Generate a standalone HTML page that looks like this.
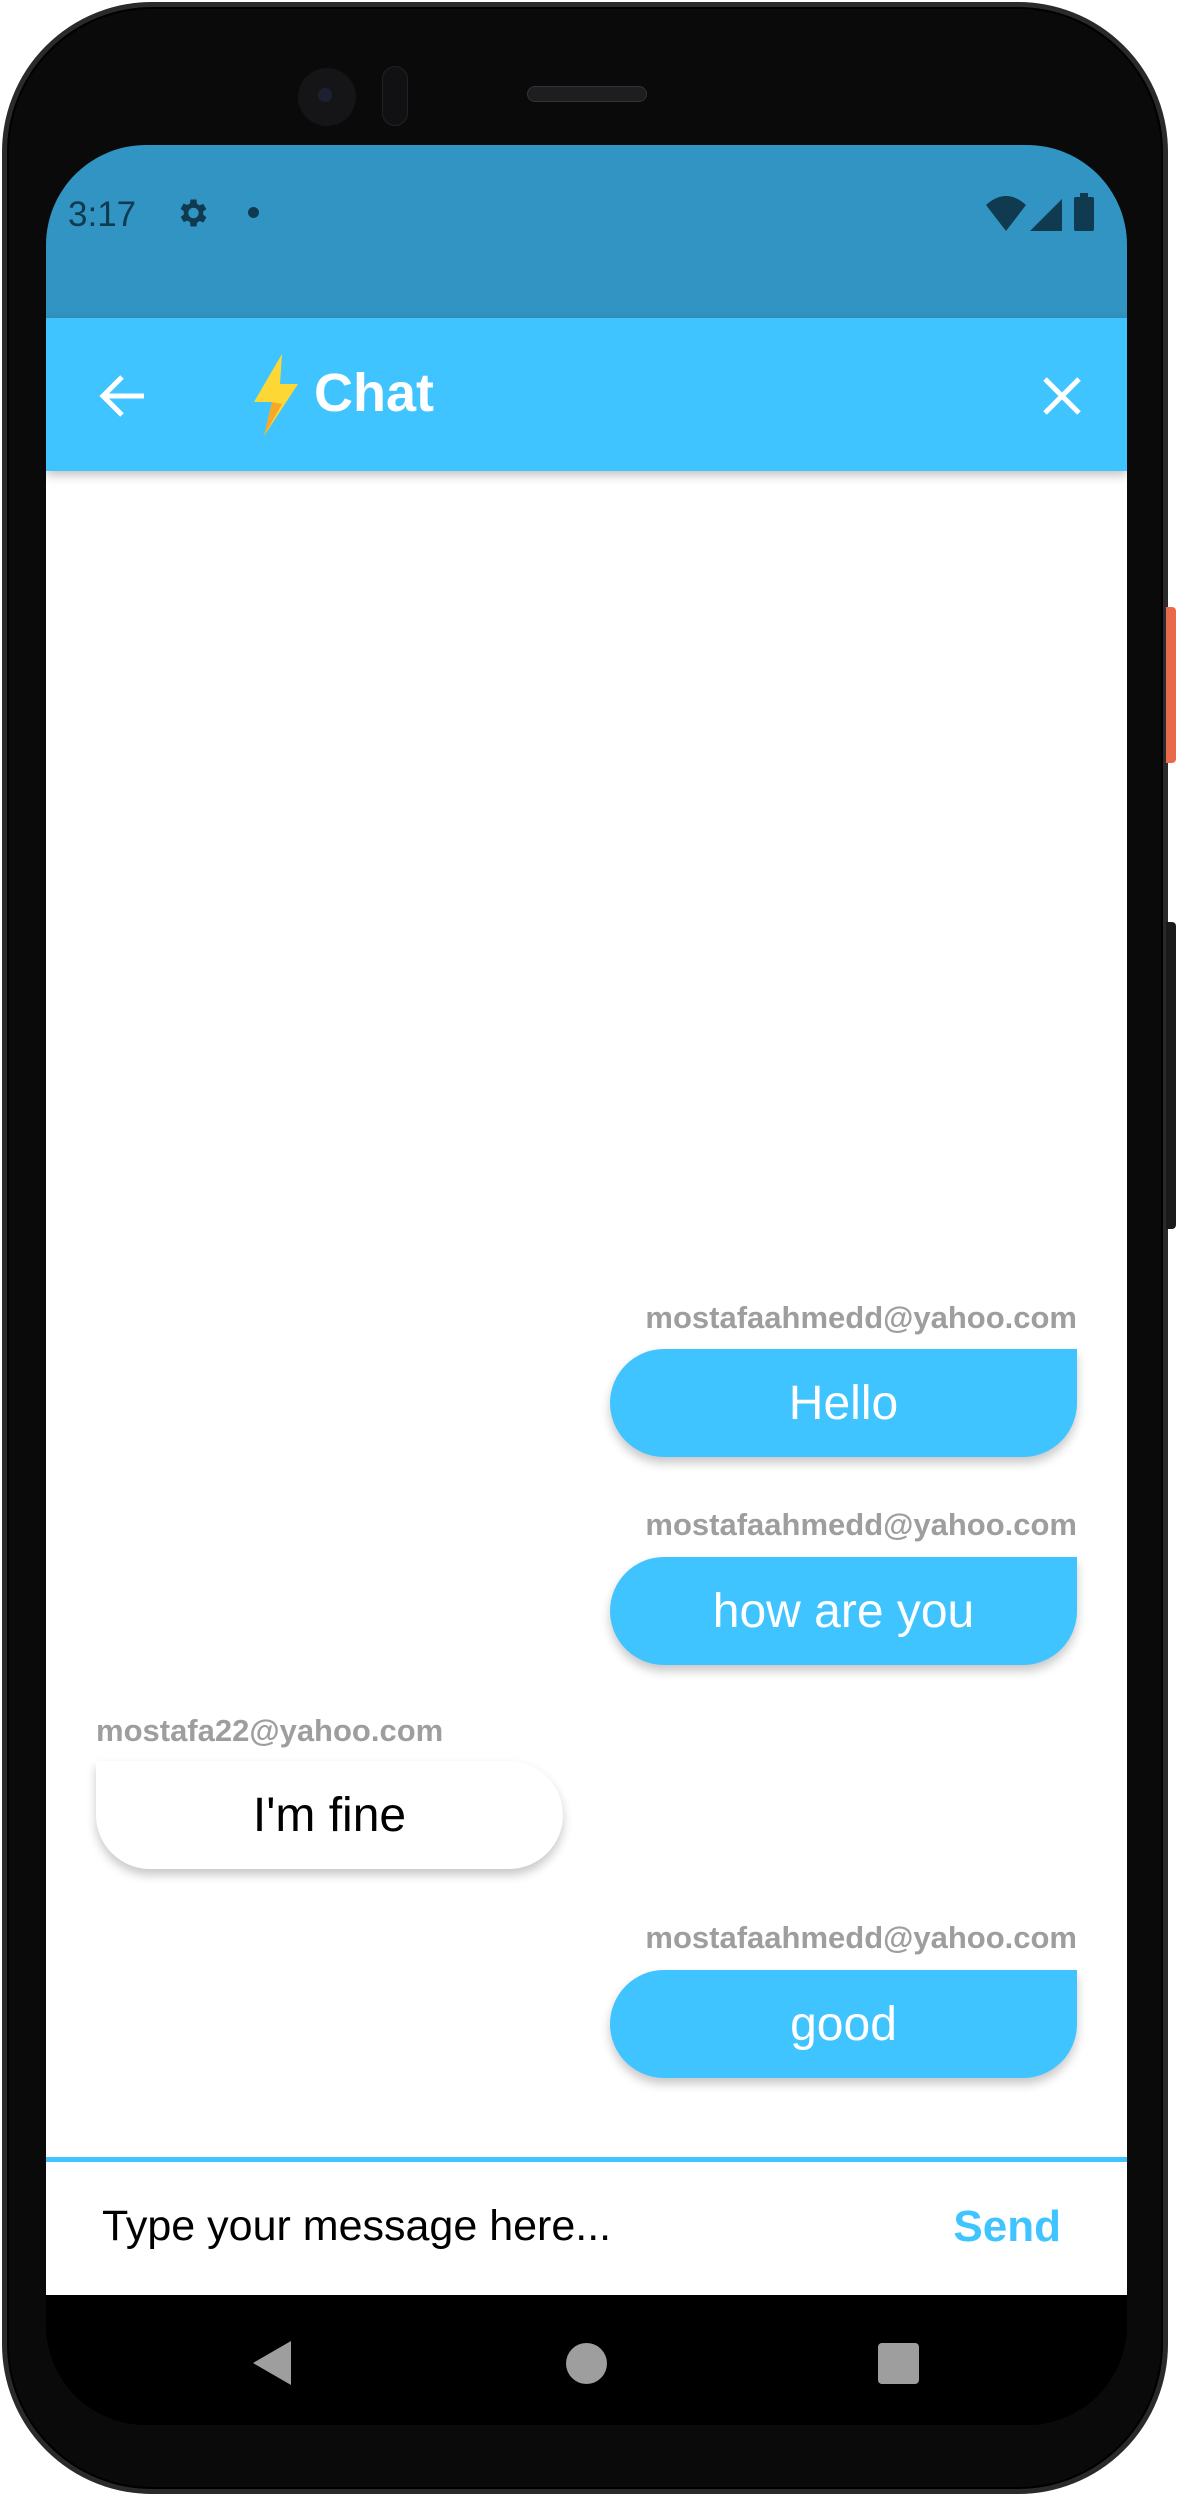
<!DOCTYPE html>
<html><head><meta charset="utf-8">
<style>
*{margin:0;padding:0;box-sizing:border-box}
html,body{width:1178px;height:2498px;background:#fff;overflow:hidden;font-family:"Liberation Sans",sans-serif}
.phone{position:absolute;left:2px;top:2px;width:1166px;height:2492px;border-radius:150px;background:#0a0a0b;border:5px solid #2a2a2c;box-shadow:0 0 0 2px #000 inset}
.btn1{position:absolute;left:1166px;top:607px;width:10px;height:156px;background:#e86a4a;border-radius:0 4px 4px 0}
.btn2{position:absolute;left:1166px;top:922px;width:10px;height:307px;background:#1a1a1a;border-radius:0 4px 4px 0}
.screen{position:absolute;left:46px;top:145px;width:1081px;height:2280px;border-radius:100px;overflow:hidden;background:#000}
.status{position:absolute;left:0;top:0;width:100%;height:173px;background:#3194c2}
.appbar{position:absolute;left:0;top:173px;width:100%;height:153px;background:#40c4ff;box-shadow:0 4px 10px rgba(0,0,0,.25);z-index:2}
.content{position:absolute;left:0;top:326px;width:100%;height:1824px;background:#fff;overflow:hidden}
.nav{position:absolute;left:0;top:2150px;width:100%;height:132px;background:#000}
.lbl{position:absolute;font-weight:bold;color:#9e9e9e;font-size:31px;white-space:nowrap}
.b{position:absolute;height:108px;display:flex;align-items:center;justify-content:center;font-size:48px;box-shadow:0 6px 10px rgba(0,0,0,.22)}
.me{background:#40c4ff;color:#fff;border-radius:54px 0 54px 54px;left:564px;width:467px}
.them{background:#fff;color:#000;border-radius:0 54px 54px 54px;left:50px;width:467px}
</style></head><body>
<div class="phone"></div>
<div class="btn1"></div><div class="btn2"></div>
<div style="position:absolute;left:298px;top:68px;width:58px;height:58px;border-radius:50%;background:#151518"></div>
<div style="position:absolute;left:318px;top:88px;width:14px;height:14px;border-radius:50%;background:#1c2030"></div>
<div style="position:absolute;left:382px;top:66px;width:26px;height:60px;border-radius:13px;background:#111114;border:1px solid #222"></div>
<div style="position:absolute;left:527px;top:86px;width:120px;height:16px;border-radius:8px;background:#1e1e20;border:1px solid #333"></div>
<div class="screen">
 <div class="status">
  <div style="position:absolute;left:22px;top:50px;font-size:35px;color:#0f3a4f">3:17</div>
  <svg style="position:absolute;left:128px;top:50px" width="36" height="36" viewBox="0 0 24 24"><path fill="#0f3a4f" d="M19.4 13a7.5 7.5 0 000-2l2.1-1.6-2-3.5-2.5 1a7.6 7.6 0 00-1.7-1L15 3h-4l-.4 2.7a7.6 7.6 0 00-1.7 1l-2.5-1-2 3.5L6.6 11a7.5 7.5 0 000 2l-2.1 1.6 2 3.5 2.5-1a7.6 7.6 0 001.7 1L11 21h4l.4-2.7a7.6 7.6 0 001.7-1l2.5 1 2-3.5zM13 15.5A3.5 3.5 0 1113 8.5a3.5 3.5 0 010 7z"/></svg>
  <div style="position:absolute;left:202px;top:62px;width:11px;height:11px;border-radius:50%;background:#0f3a4f"></div>
  <svg style="position:absolute;left:940px;top:48px" width="120" height="40" viewBox="0 0 120 40"><path fill="#0f3a4f" d="M0 12 Q20 -6 40 12 L20 38Z"/><path fill="#0f3a4f" d="M44 38 L76 38 L76 6Z"/><rect x="88" y="4" width="20" height="34" rx="2" fill="#0f3a4f"/><rect x="94" y="0" width="8" height="5" fill="#0f3a4f"/></svg>
 </div>
 <div class="appbar">
  <svg style="position:absolute;left:52px;top:56px" width="48" height="44" viewBox="0 0 48 44"><path d="M4 22H46M24 3L5 22l19 19" stroke="#fff" stroke-width="5" fill="none"/></svg>
  <svg style="position:absolute;left:206px;top:36px" width="48" height="82" viewBox="0 0 48 82"><path fill="#fdd835" d="M30 0L2 48h18L12 82 46 30H28z"/><path fill="#f9a825" d="M20 48L12 82 30 50z"/></svg>
  <div style="position:absolute;left:268px;top:44px;font-size:54px;font-weight:bold;color:#fff">Chat</div>
  <svg style="position:absolute;left:996px;top:58px" width="40" height="40" viewBox="0 0 40 40"><path d="M3 3L37 37M37 3L3 37" stroke="#fff" stroke-width="5"/></svg>
 </div>
 <div class="content">
  <div class="lbl" style="right:50px;top:829px">mostafaahmedd@yahoo.com</div>
  <div class="b me" style="top:878px">Hello</div>
  <div class="lbl" style="right:50px;top:1036px">mostafaahmedd@yahoo.com</div>
  <div class="b me" style="top:1086px">how are you</div>
  <div class="lbl" style="left:50px;top:1242px">mostafa22@yahoo.com</div>
  <div class="b them" style="top:1290px">I'm fine</div>
  <div class="lbl" style="right:50px;top:1449px">mostafaahmedd@yahoo.com</div>
  <div class="b me" style="top:1499px">good</div>
  <div style="position:absolute;left:0;top:1686px;width:100%;height:5px;background:#40c4ff"></div>
  <div style="position:absolute;left:56px;top:1731px;font-size:43px;color:#000">Type your message here...</div>
  <div style="position:absolute;right:66px;top:1731px;font-size:44px;font-weight:bold;color:#40c4ff">Send</div>
 </div>
 <div class="nav">
  <svg style="position:absolute;left:205px;top:46px" width="42" height="44" viewBox="0 0 42 44"><path fill="#9e9e9e" d="M40 0V44L2 22Z"/></svg>
  <div style="position:absolute;left:520px;top:48px;width:41px;height:41px;border-radius:50%;background:#9e9e9e"></div>
  <div style="position:absolute;left:832px;top:48px;width:41px;height:41px;border-radius:4px;background:#9e9e9e"></div>
 </div>
</div>
</body></html>
